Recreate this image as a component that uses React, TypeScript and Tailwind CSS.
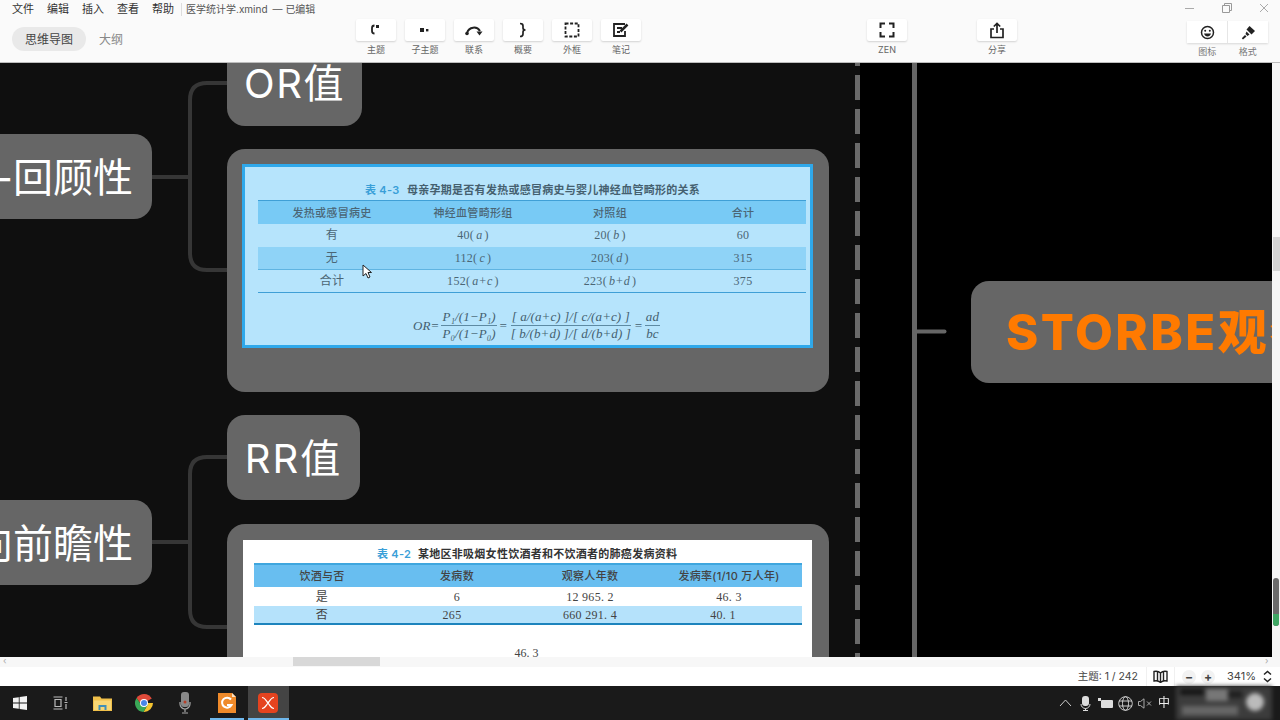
import React from "react"

const cjk = "font-['Inter','Noto_Sans_CJK_SC',sans-serif]"
const book = "font-['Liberation_Serif','Noto_Sans_CJK_SC',serif]"

function ToolButton({ label, children }: { label: string; children: React.ReactNode }) {
  return (
    <div className="flex flex-col items-center">
      <div className="flex h-[22px] w-[40px] items-center justify-center rounded-[2px] bg-white shadow-[0_1px_2px_rgba(0,0,0,0.16)]">
        {children}
      </div>
      <span className="mt-[3px] text-[9px] leading-[12px] text-[#666]">{label}</span>
    </div>
  )
}

const tools = [
  {
    label: "主题",
    icon: (
      <svg width="14" height="14" viewBox="0 0 14 14" fill="none" stroke="#222" strokeWidth="1.8">
        <path d="M5.500 2.500C3.500 2.500 3 3.500 3 5v3c0 1.500.5 2.500 2.500 2.500" />
        <rect x="7" y="2" width="3" height="3" fill="#222" stroke="none" />
      </svg>
    ),
  },
  {
    label: "子主题",
    icon: (
      <svg width="14" height="14" viewBox="0 0 14 14" fill="#222">
        <rect x="2" y="5" width="4" height="4" />
        <rect x="8" y="6" width="2.4" height="2.4" />
      </svg>
    ),
  },
  {
    label: "联系",
    icon: (
      <svg width="20" height="14" viewBox="0 0 20 14" fill="none" stroke="#222" strokeWidth="2">
        <path d="M3 10C5 3.500 13 3 16 8" />
        <path d="M12.500 8.500h6l-3 4z" fill="#222" stroke="none" />
        <circle cx="3" cy="10.500" r="1.800" fill="#222" stroke="none" />
      </svg>
    ),
  },
  {
    label: "概要",
    icon: (
      <svg width="12" height="16" viewBox="0 0 12 16" fill="none" stroke="#222" strokeWidth="1.7">
        <path d="M3 1.500c2.500 0 3 .8 3 2.500v2c0 1.300.6 2 2.500 2C6.600 8 6 8.700 6 10v2c0 1.700-.5 2.500-3 2.500" />
      </svg>
    ),
  },
  {
    label: "外框",
    icon: (
      <svg width="16" height="16" viewBox="0 0 16 16" fill="none" stroke="#222" strokeWidth="1.8" strokeDasharray="3 1.6">
        <rect x="1.500" y="1.500" width="13" height="13" />
      </svg>
    ),
  },
  {
    label: "笔记",
    icon: (
      <svg width="18" height="16" viewBox="0 0 18 16" fill="none" stroke="#222" strokeWidth="1.800">
        <path d="M13 2H2v12h11V9" />
        <path d="M5 6h5M5 10h3" />
        <path d="M8.500 9.500 15.500 2.500" strokeWidth="2.500" />
      </svg>
    ),
  },
]

function Header() {
  return (
    <div className="relative h-[63px] shrink-0 border-b border-[#bdbdbd] bg-[#fafafa] text-[#333]">
      <div className="flex h-[18px] items-center pl-[12px] text-[11px]">
        <span className="w-[35px]">文件</span>
        <span className="w-[35px]">编辑</span>
        <span className="w-[35px]">插入</span>
        <span className="w-[35px]">查看</span>
        <span className="w-[27px]">帮助</span>
        <span className="ml-[2px] h-[13px] w-px bg-[#ddd]" />
        <span className="ml-[4px] text-[10px] text-[#555]">医学统计学.xmind</span>
        <span className="ml-[5px] text-[10px] text-[#555]">— 已编辑</span>
      </div>
      <div className="absolute left-[12px] top-[27px] flex items-center text-[12px]">
        <span className="flex h-[24px] w-[74px] items-center justify-center rounded-full bg-[#e9e9e9] pt-[1px] text-[#444]">思维导图</span>
        <span className="ml-[13px] pt-[1px] text-[#888]">大纲</span>
      </div>
      <div className="absolute left-[356px] top-[19px] flex gap-[9px]">
        {tools.map((t) => (
          <ToolButton key={t.label} label={t.label}>{t.icon}</ToolButton>
        ))}
      </div>
      <div className="absolute left-[867px] top-[19px]">
        <ToolButton label="ZEN">
          <svg width="16" height="16" viewBox="0 0 16 16" fill="none" stroke="#222" strokeWidth="2">
            <path d="M1.500 6V1.500H6M10 1.500h4.500V6M14.500 10v4.500H10M6 14.500H1.500V10" />
          </svg>
        </ToolButton>
      </div>
      <div className="absolute left-[977px] top-[19px]">
        <ToolButton label="分享">
          <svg width="16" height="17" viewBox="0 0 16 17" fill="none" stroke="#222" strokeWidth="1.700">
            <path d="M5 7H2v8.500h12V7h-3" />
            <path d="M8 11V1.500M4.800 4.500 8 1.500l3.200 3" />
          </svg>
        </ToolButton>
      </div>
      <div className="absolute left-[1187px] top-[21px] w-[81px]">
        <div className="flex h-[22px] divide-x divide-[#e6e6e6] bg-white shadow-[0_1px_2px_rgba(0,0,0,0.14)]">
          <div className="flex flex-1 items-center justify-center">
            <svg width="15" height="15" viewBox="0 0 15 15" fill="none" stroke="#222" strokeWidth="1.500">
              <circle cx="7.500" cy="7.500" r="6" />
              <circle cx="5.200" cy="5.800" r="1" fill="#222" stroke="none" />
              <circle cx="9.800" cy="5.800" r="1" fill="#222" stroke="none" />
              <path d="M4 8.500h7c-.5 2-2 3-3.500 3S4.500 10.500 4 8.500z" fill="#222" stroke="none" />
            </svg>
          </div>
          <div className="flex flex-1 items-center justify-center">
            <svg width="15" height="15" viewBox="0 0 15 15" fill="#222">
              <path d="M8.500 1 14 6l-3.500 3.500L5.500 4.500z" />
              <path d="M5.500 6.500l3 3-2 1.500-2-2z" />
              <path d="M4 10l1.500 1.500L2 14.500.8 13.300z" />
            </svg>
          </div>
        </div>
        <div className="mt-[3px] flex text-[9px] leading-[12px] text-[#777]">
          <span className="flex-1 text-center">图标</span>
          <span className="flex-1 text-center">格式</span>
        </div>
      </div>
      <div className="absolute right-[11px] top-[3px] flex items-center gap-[27px] text-[#999]">
        <svg width="10" height="10" viewBox="0 0 10 10" stroke="#aaa"><path d="M0 5.500h9" /></svg>
        <svg width="10" height="10" viewBox="0 0 10 10" fill="none" stroke="#999"><path d="M.5 2.500h7v7h-7zM2.500 2.500v-2h7v7h-2" /></svg>
        <svg width="10" height="10" viewBox="0 0 10 10" stroke="#aaa"><path d="M1 1l8 8M9 1 1 9" /></svg>
      </div>
    </div>
  )
}

function Formula() {
  const frac = (top: string, bottom: string) => (
    <span className="mx-[2px] inline-flex flex-col items-center leading-[16px]">
      <span className="border-b border-[#5d8aa3] px-[1px]">{top}</span>
      <span className="px-[1px]">{bottom}</span>
    </span>
  )
  return (
    <div className={`flex items-center justify-center text-[13px] tracking-[0.1px] italic text-[#44606f] ${book}`}>
      <span>OR=</span>
      {frac("P₁/(1−P₁)", "P₀/(1−P₀)")}
      <span>=</span>
      {frac("[ a/(a+c) ]/[ c/(a+c) ]", "[ b/(b+d) ]/[ d/(b+d) ]")}
      <span>=</span>
      {frac("ad", "bc")}
    </div>
  )
}

// "40(a)" style cell: the letters inside the brackets are set in italic
function Count({ n, v }: { n: string; v: string }) {
  return (
    <>
      {n}(<i className="mx-[2px]">{v}</i>)
    </>
  )
}

const rows43: React.ReactNode[][] = [
  ["有", <Count n="40" v="a" />, <Count n="20" v="b" />, "60"],
  ["无", <Count n="112" v="c" />, <Count n="203" v="d" />, "315"],
  ["合计", <Count n="152" v="a+c" />, <Count n="223" v="b+d" />, "375"],
]

function Table43() {
  return (
    <div className="h-[184px] w-[571px] border-[3px] border-[#2fa8ea] bg-[#b6e4fc] pl-[13px] pr-[3px] pt-[15px]">
      <div className={`flex h-[17px] items-center pl-[107px] text-[11px] tracking-[0.27px] font-semibold text-[#45606f] ${cjk}`}>
        <span className="w-[42px] text-[#3a9fd8]">表 4-3</span>
        <span>母亲孕期是否有发热或感冒病史与婴儿神经血管畸形的关系</span>
      </div>
      <table className={`mt-[1px] w-[548px] table-fixed border-y border-[#3f9fd6] text-[12px] tracking-[0.3px] text-[#4b6675] ${book}`}>
        <colgroup>
          <col className="w-[148px]" />
          <col className="w-[134px]" />
          <col className="w-[140px]" />
          <col className="w-[126px]" />
        </colgroup>
        <thead>
          <tr className={`h-[23px] bg-[#78caf5] text-[11px] ${cjk}`}>
            <th className="pt-[1px] font-medium">发热或感冒病史</th>
            <th className="pt-[1px] font-medium">神经血管畸形组</th>
            <th className="pt-[1px] font-medium">对照组</th>
            <th className="pt-[1px] font-medium">合计</th>
          </tr>
        </thead>
        <tbody>
          {rows43.map((r, i) => (
            <tr key={i} className={i === 1 ? "h-[23px] border-b border-[#5fb4e2] bg-[#8fd3f7]" : "h-[23px]"}>
              {r.map((c, j) => (
                <td key={j} className={i === 1 ? "pt-[1px] text-center" : "text-center"}>{c}</td>
              ))}
            </tr>
          ))}
        </tbody>
      </table>
      <div className="mt-[16px] pl-[10px]">
        <Formula />
      </div>
    </div>
  )
}

const rows42 = [
  ["是", "6", "12 965. 2", "46. 3"],
  ["否", "265", "660 291. 4", "40. 1"],
]

function Table42() {
  return (
    <div className="h-[140px] w-[569px] bg-white pl-[11px] pt-[6px]">
      <div className={`flex h-[16px] items-center pl-[123px] text-[11px] tracking-[0.27px] font-semibold text-[#333] ${cjk}`}>
        <span className="w-[41px] text-[#3a9fd8]">表 4-2</span>
        <span>某地区非吸烟女性饮酒者和不饮酒者的肺癌发病资料</span>
      </div>
      <table className={`mt-[1px] w-[548px] table-fixed border-y-2 border-t-[#3fa6de] border-b-[#1d84bd] text-[12px] leading-[15px] tracking-[0.3px] text-[#444] ${book}`}>
        <colgroup>
          <col className="w-[136px]" />
          <col className="w-[134px]" />
          <col className="w-[132px]" />
          <col className="w-[146px]" />
        </colgroup>
        <thead>
          <tr className={`h-[23px] bg-[#68bef0] text-[11px] ${cjk}`}>
            <th className="pt-[1px] font-medium">饮酒与否</th>
            <th className="pt-[1px] font-medium">发病数</th>
            <th className="pt-[1px] font-medium">观察人年数</th>
            <th className="pt-[1px] font-medium">发病率(1/10 万人年)</th>
          </tr>
        </thead>
        <tbody>
          {rows42.map((r, i) => (
            <tr key={r[0]} className={i === 1 ? "h-[18px] bg-[#b5e2fb]" : "h-[19px]"}>
              <td className="pt-[2px] text-center">{r[0]}</td>
              <td className={`pt-[2px] text-center ${i === 1 ? "pr-[10px]" : ""}`}>{r[1]}</td>
              <td className="pt-[2px] text-center">{r[2]}</td>
              <td className={`pt-[2px] text-center ${i === 1 ? "pr-[12px]" : ""}`}>{r[3]}</td>
            </tr>
          ))}
        </tbody>
      </table>
      <div className={`mt-[19px] pr-[13px] text-center text-[12px] text-[#444] ${book}`}>46. 3</div>
    </div>
  )
}

function Canvas() {
  const nodeText = `text-[40px] leading-none text-white ${cjk}`
  return (
    <div className="relative flex min-h-0 flex-1 overflow-hidden">
      <div className="relative w-[860px] bg-[#0f0f0f]">
        {/* branches between the nodes */}
        <svg className="absolute inset-0" width="857" height="594" fill="none" stroke="#363636" strokeWidth="4">
          <path d="M152 114h36M227 20h-20q-17 0-17 17v153q0 17 17 17h20" />
          <path d="M152 479h36M227 394h-20q-17 0-17 17v136q0 17 17 17h20" />
        </svg>
        <div className="absolute left-[-50px] top-[71px] flex h-[85px] w-[202px] items-center justify-end rounded-[18px] bg-[#666] pr-[19px] pt-[3px]">
          <span className={`whitespace-nowrap ${nodeText}`}>-回顾性</span>
        </div>
        <div className="absolute left-[-50px] top-[437px] flex h-[85px] w-[202px] items-center justify-end rounded-[18px] bg-[#666] pr-[19px] pt-[3px]">
          <span className={`whitespace-nowrap ${nodeText}`}>向前瞻性</span>
        </div>
        <div className="absolute left-[227px] top-[-30px] flex h-[93px] w-[135px] items-end justify-center rounded-[18px] bg-[#666] pb-[22px]">
          <span className={`tracking-[1.500px] ${nodeText}`}>OR值</span>
        </div>
        <div className="absolute left-[227px] top-[86px] h-[243px] w-[602px] rounded-[18px] bg-[#666] pl-[15px] pt-[15px]">
          <Table43 />
        </div>
        <div className="absolute left-[227px] top-[352px] flex h-[85px] w-[133px] items-center justify-center rounded-[18px] bg-[#666] pt-[2px]">
          <span className={`tracking-[2px] ${nodeText}`}>RR值</span>
        </div>
        <div className="absolute left-[227px] top-[461px] h-[243px] w-[602px] rounded-[18px] bg-[#666] pl-[16px] pt-[16px]">
          <Table42 />
        </div>
        {/* mouse pointer */}
        <svg className="absolute left-[362px] top-[201px]" width="10" height="15" viewBox="0 0 10 15">
          <path d="M1 1v11l3-2.500 2 4.500 2-1-2-4.500h3.500z" fill="#fff" stroke="#222" strokeWidth="1" />
        </svg>
        <svg className="absolute left-[855px] top-0" width="5" height="594">
          <path d="M2.500 0v594" stroke="#6a6a6a" strokeWidth="5" strokeDasharray="25 9" strokeDashoffset="22" />
        </svg>
      </div>
      <div className="relative flex-1 bg-black">
        <svg className="absolute inset-0" width="412" height="594" fill="none" stroke="#666">
          <path d="M54.500 0v594" strokeWidth="5" />
          <path d="M54.500 268.500h30" strokeWidth="4" strokeLinecap="round" />
        </svg>
        <div className="absolute left-[111px] top-[218px] flex h-[102px] w-[320px] items-center rounded-[18px] bg-[#666] pl-[35px]">
          <span className={`whitespace-nowrap text-[49px] leading-none font-extrabold tracking-[2.500px] text-[#ff7a00] ${cjk}`}>STORBE观察</span>
        </div>
      </div>
      <div className="relative w-[8px] bg-[#f6f6f6]">
        <div className="absolute left-[1px] top-[174px] h-[34px] w-[7px] bg-[#d6d6d6]" />
        <div className="absolute left-[1px] top-[515px] h-[48px] w-[6px] overflow-hidden rounded-[3px] bg-[#6a6a6a]">
          <div className="mt-[36px] h-[12px] bg-[#3fa764]" />
        </div>
      </div>
    </div>
  )
}

function StatusBars() {
  return (
    <>
      <div className="relative h-[10px] shrink-0 bg-[#f7f7f7]">
        <div className="absolute left-[293px] top-0 h-[9px] w-[87px] bg-[#d8d8d8]" />
        <span className="absolute left-[3px] top-[-1px] text-[9px] leading-[10px] text-[#aaa]">‹</span>
        <span className="absolute left-[1265px] top-[-1px] text-[9px] leading-[10px] text-[#aaa]">›</span>
      </div>
      <div className="flex h-[19px] shrink-0 items-center justify-end bg-white text-[11px] text-[#444]">
        <span className={`text-[10.500px] ${cjk}`}>主题: 1 / 242</span>
        <span className="ml-[8px] flex h-full w-[29px] items-center justify-center border-x border-[#f0f0f0]">
          <svg width="15" height="13" viewBox="0 0 15 13" fill="none" stroke="#222" strokeWidth="1.400">
            <path d="M7.500 3C6 1.500 3.500 1 1 1.500v9.500c2.500-.5 5 0 6.500 1.500 1.500-1.500 4-2 6.500-1.500V1.500C11.500 1 9 1.500 7.500 3zM7.500 3v9.500M4.500 1.500v9.500M10.500 1.500v9.500" />
          </svg>
        </span>
        <span className="ml-[7px] flex h-[14px] w-[14px] items-center justify-center rounded-full bg-[#f2f2f2] text-[12px] leading-none font-bold">−</span>
        <span className="ml-[5px] flex h-[14px] w-[14px] items-center justify-center rounded-full bg-[#f2f2f2] text-[12px] leading-none font-bold">+</span>
        <span className="ml-[12px] text-[#444]">341%</span>
        <svg className="ml-[7px] mr-[8px]" width="9" height="13" viewBox="0 0 9 13" fill="none" stroke="#222" strokeWidth="1.500">
          <path d="M1 4.500l3.500-3 3.500 3M1 8.500l3.500 3 3.500-3" />
        </svg>
      </div>
    </>
  )
}

function Taskbar() {
  return (
    <div className="relative flex h-[34px] shrink-0 items-center bg-[#1a1a1a]">
      <div className="flex h-full items-center">
        <div className="flex h-full w-[40px] items-center justify-center">
          <svg width="14" height="14" viewBox="0 0 14 14" fill="#f2f2f2">
            <path d="M0 2l5.800-.8v5.300H0zM6.600 1.100 14 0v6.500H6.600zM0 7.400h5.800v5.400L0 12zM6.600 7.400H14V14l-7.400-1z" />
          </svg>
        </div>
        <div className="flex h-full w-[40px] items-center justify-center">
          <svg width="15" height="14" viewBox="0 0 15 14" fill="none" stroke="#bbb" strokeWidth="1.200">
            <path d="M.5 1h9M.5 13h9M2 3.500h6v7H2zM13 1v4M13 8v5M11.500 6.500h3" />
          </svg>
        </div>
        <div className="flex h-full w-[44px] items-center justify-center">
          <svg width="19" height="16" viewBox="0 0 19 16">
            <path d="M0 1.500h7l1.500 2H19V16H0z" fill="#f0c04a" />
            <path d="M1 5.500h17V15H1z" fill="#f8d775" />
            <path d="M5.500 10h8v5h-2v-3h-4v3h-2z" fill="#3f8fb8" />
          </svg>
        </div>
        <div className="flex h-full w-[40px] items-center justify-center">
          <svg width="18" height="18" viewBox="0 0 18 18">
            <path d="M9 9 16.800 4.500A9 9 0 0 0 1.600 3.900L5 9z" fill="#df4a3a" />
            <path d="M9 9H18a9 9 0 0 1-9 9l-.5 0L13 10z" fill="#f4c430" />
            <path d="M1.600 3.900A9 9 0 0 0 8.500 18L13 10 5 9z" fill="#3aa757" />
            <circle cx="9" cy="9" r="4" fill="#fff" />
            <circle cx="9" cy="9" r="3" fill="#4a86e8" />
          </svg>
        </div>
        <div className="flex h-full w-[42px] items-center justify-center">
          <svg width="12" height="22" viewBox="0 0 12 22">
            <rect x="2" y="0" width="8" height="15" rx="3" fill="#8a8a8a" />
            <circle cx="6" cy="10" r="1.500" fill="#b8402a" />
            <path d="M1 10v2a5 5 0 0 0 10 0v-2M6 17v3M3 21h6" fill="none" stroke="#aaa" strokeWidth="1.200" />
          </svg>
        </div>
        <div className="relative flex h-full w-[42px] items-center justify-center">
          <svg width="20" height="20" viewBox="0 0 20 20">
            <path d="M1 0h14l4 4v16H1z" fill="#ef8a2a" />
            <path d="M15 0l4 4h-4z" fill="#fbe3c4" />
            <path d="M14 6.500A5 5 0 1 0 14.500 12H10" fill="none" stroke="#fff" strokeWidth="2" />
          </svg>
          <span className="absolute bottom-0 left-[4px] h-[2px] w-[34px] bg-[#6fb7ec]" />
        </div>
        <div className="relative flex h-full w-[41px] items-center justify-center bg-[#444] pr-[2px]">
          <svg width="20" height="20" viewBox="0 0 20 20">
            <rect width="20" height="20" rx="4" fill="#e5431f" />
            <path d="M4 4.500c3 0 4 3 6 5.500 2-2.500 3-5.500 6-5.500M4 15.500c3 0 4-3 6-5.500 2 2.500 3 5.500 6 5.500" fill="none" stroke="#fff" strokeWidth="1.200" />
          </svg>
          <span className="absolute bottom-0 left-0 h-[2px] w-full bg-[#6fb7ec]" />
        </div>
      </div>
      <div className="absolute left-[1059px] top-0 flex h-full items-center">
        <svg width="13" height="8" viewBox="0 0 13 8" fill="none" stroke="#ccc"><path d="M1 7l5.500-6L12 7" /></svg>
        <svg className="ml-[8px]" width="11" height="15" viewBox="0 0 11 15">
          <rect x="2" y="0" width="7" height="10" rx="3" fill="#ddd" />
          <path d="M1 8a4.500 4.500 0 0 0 9 0M5.500 12.500V14M3 14.500h5" fill="none" stroke="#ddd" />
        </svg>
        <svg className="ml-[7px]" width="15" height="11" viewBox="0 0 15 11" fill="#ddd">
          <rect x="3" y="2" width="12" height="8" rx="1" />
          <rect x="0" y="0" width="3" height="3" />
        </svg>
        <svg className="ml-[5px]" width="15" height="15" viewBox="0 0 15 15" fill="none" stroke="#ddd" strokeWidth="0.900">
          <circle cx="7.500" cy="7.500" r="6.800" />
          <ellipse cx="7.500" cy="7.500" rx="3" ry="6.800" />
          <path d="M1 5h13M1 10h13" />
        </svg>
        <svg className="ml-[5px]" width="14" height="11" viewBox="0 0 14 11" fill="none" stroke="#aaa">
          <path d="M.5 3.500h2L6 .8v9.400L2.500 7.500h-2zM9 3.500l4 4M13 3.500l-4 4" />
        </svg>
        <span className="ml-[6px] text-[12px] text-[#eee]">中</span>
      </div>
      {/* blurred-out clock */}
      <div className="absolute left-[1176px] top-0 h-full w-[96px] overflow-hidden bg-[#3c3c3c] blur-[2px]">
        <div className="absolute left-[4px] top-[3px] h-[6px] w-[24px] bg-[#151515]" />
        <div className="absolute left-[52px] top-[5px] h-[7px] w-[14px] bg-[#202020]" />
        <div className="absolute left-[6px] top-[20px] h-[9px] w-[56px] bg-[#666]" />
        <div className="absolute left-[30px] top-[3px] h-[12px] w-[22px] bg-[#777]" />
        <div className="absolute left-[70px] top-[7px] h-[18px] w-[18px] rounded-full bg-[#bbb]" />
      </div>
    </div>
  )
}

export default function App() {
  return (
    <div className={`flex h-[720px] w-[1280px] flex-col overflow-hidden ${cjk} blur-[0.4px]`}>
      <Header />
      <Canvas />
      <StatusBars />
      <Taskbar />
    </div>
  )
}
